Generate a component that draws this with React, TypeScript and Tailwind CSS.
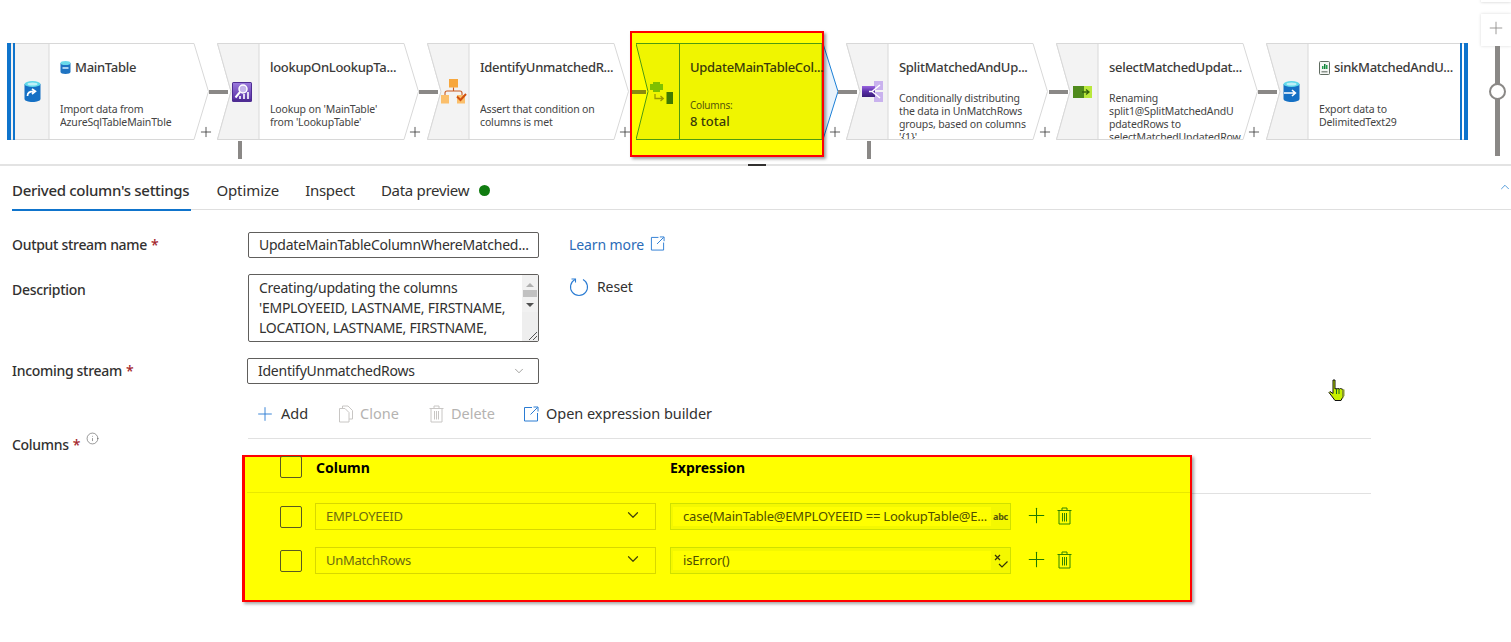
import React from 'react';
import { ChevronDown, ChevronUp, Info, Plus } from 'lucide-react';

const DbIcon = ({ arrow }: { arrow: 'curve' | 'right' }) => (
  <svg width="17" height="21" viewBox="0 0 17 21">
    <path d="M0.5 3 v15 c0 1.6 3.6 3 8 3 s8-1.4 8-3 V3z" fill="#1570c4" />
    <ellipse cx="8.5" cy="3" rx="8" ry="3" fill="#5fd8ea" />
    <ellipse cx="8.5" cy="3" rx="5" ry="1.5" fill="#bdf0f7" />
    {arrow === 'curve' ? (
      <path d="M3.5 15 c0-3 2-4.6 6-4.6 M8 8 l3.4 2.4 -3.4 2.6" fill="none" stroke="#fff" strokeWidth="1.7" />
    ) : (
      <path d="M1 12 h11 M9 9 l3.4 3 -3.4 3" fill="none" stroke="#fff" strokeWidth="1.6" />
    )}
  </svg>
);

const MiniSql = () => (
  <svg width="11" height="13" viewBox="0 0 11 13">
    <path d="M0.5 2 v9 c0 1 2.2 2 5 2 s5-1 5-2 V2z" fill="#1f74c2" />
    <ellipse cx="5.5" cy="2" rx="5" ry="2" fill="#6adbea" />
    <rect x="2.5" y="6" width="6" height="2" fill="#a9d3f2" />
  </svg>
);

const MiniCsv = () => (
  <svg width="11" height="14" viewBox="0 0 11 14">
    <rect x="0.5" y="0.5" width="10" height="13" rx="1" fill="#f4f6f4" stroke="#5f6b60" />
    <rect x="3" y="5" width="1.5" height="3" fill="#1e9e4a" />
    <rect x="5" y="3" width="1.5" height="5" fill="#137a38" />
    <rect x="7" y="4" width="1.5" height="4" fill="#1e9e4a" />
    <rect x="2.5" y="10" width="6" height="1.5" fill="#8a938b" />
  </svg>
);

const LookupIcon = () => (
  <svg width="20" height="20" viewBox="0 0 20 20">
    <defs>
      <linearGradient id="lookupFill" x1="0" y1="0" x2="0" y2="1">
        <stop offset="0" stopColor="#9a78dc" />
        <stop offset="1" stopColor="#5c34a8" />
      </linearGradient>
    </defs>
    <rect width="20" height="20" rx="1.5" fill="#4f2d94" />
    <rect x="1" y="1" width="18" height="16" fill="url(#lookupFill)" />
    <path d="M8 14 V17 M12 12 V17 M16 10 V17" stroke="#fff" strokeWidth="1.6" />
    <circle cx="11" cy="7" r="4" fill="#c4b4ea" stroke="#fff" strokeWidth="1.5" />
    <path d="M8 10 L3.5 15.5" stroke="#fff" strokeWidth="2" />
  </svg>
);

const AssertIcon = () => (
  <svg width="27" height="25" viewBox="0 0 27 25">
    <rect x="9" y="0" width="9" height="8.5" fill="#f7a73d" />
    <path d="M13.5 8.5 v3.5 M5 16 v-2 q0-2 2-2 h13 q2 0 2 2 v2" fill="none" stroke="#c8591e" strokeWidth="1.1" />
    <rect x="1" y="16" width="8" height="8.5" fill="#fbbf6b" />
    <rect x="17" y="16" width="8" height="8.5" fill="#fbbf6b" />
    <path d="M17 17.5 l3.5 3.5 5.5-6" fill="none" stroke="#d0500f" strokeWidth="2" />
  </svg>
);

const DerivedIcon = () => (
  <svg width="24" height="23" viewBox="0 0 24 23">
    <path d="M3 0 h7 v2 h3 v6 h-3 v2 h-7 v-2 h-3 v-6 h3z" fill="#7fc000" />
    <path d="M5 12 v4.5 h8 M10.5 14 l2.8 2.5 -2.8 2.5" fill="none" stroke="#9a9a00" strokeWidth="1.3" />
    <rect x="16.5" y="10" width="6.5" height="12" fill="#3f7a00" />
  </svg>
);

const SplitIcon = () => (
  <svg width="22" height="21" viewBox="0 0 22 21">
    <defs>
      <linearGradient id="splitFill" x1="0" y1="0" x2="0" y2="1">
        <stop offset="0" stopColor="#9a66e0" />
        <stop offset="0.5" stopColor="#5a2fa8" />
        <stop offset="1" stopColor="#3a1f7a" />
      </linearGradient>
    </defs>
    <rect x="12" y="0" width="9" height="9" fill="#c9b2ee" />
    <rect x="12" y="11" width="9" height="10" fill="#c9b2ee" />
    <rect x="0" y="5" width="13" height="11" fill="url(#splitFill)" />
    <path d="M7 10.5 H10 L18 4 M10 10.5 L18 17" fill="none" stroke="#fff" strokeWidth="1.5" />
  </svg>
);

const SelectIcon = () => (
  <svg width="19" height="12" viewBox="0 0 19 12">
    <rect x="0" y="0" width="11" height="12" fill="#4f8a1c" />
    <rect x="11" y="0" width="8" height="12" fill="#b9e83c" />
    <path d="M9 6 h7 M13 3.5 l3 2.5 -3 2.5" fill="none" stroke="#35620c" strokeWidth="1.3" />
  </svg>
);

const Shape = ({ leftFlat, rightFlat }: { leftFlat?: boolean; rightFlat?: boolean }) => {
  const w = 202;
  const leftEdge = leftFlat ? 'L0.5 0.5' : 'L14 48.5 L0.5 0.5';
  const rightEdge = rightFlat ? `L${w - 0.5} 0.5 L${w - 0.5} 96.5` : `L${w - 15} 0.5 L${w - 0.5} 48.5 L${w - 15} 96.5`;
  return (
    <svg className="absolute inset-0" width={w} height="97" viewBox={`0 0 ${w} 97`}>
      <path d={`M0.5 0.5 ${rightEdge} L0.5 96.5 ${leftEdge}Z`} fill="#fff" stroke="#d8d8d8" />
      <path d={`M0.5 0.5 L42 0.5 L42 96.5 L0.5 96.5 ${leftEdge}Z`} fill="#f3f3f3" stroke="#d8d8d8" />
    </svg>
  );
};

type NodeProps = {
  pos: string;
  icon: React.ReactNode;
  titleIcon?: React.ReactNode;
  title: string;
  lines: string[];
  descPad: string;
  first?: boolean;
  last?: boolean;
};

const FlowNode = ({ pos, icon, titleIcon, title, lines, descPad, first, last }: NodeProps) => (
  <div className={`absolute top-[43px] h-[97px] w-[202px] ${pos}`}>
    <Shape leftFlat={first} rightFlat={last} />
    <div className="absolute left-[11px] top-0 flex h-[97px] w-[28px] items-center justify-center">{icon}</div>
    <div className={`absolute left-[53px] top-0 h-[96px] w-[140px] overflow-hidden pt-[18px] ${descPad}`}>
      <div className="flex h-[13px] items-center gap-1 whitespace-nowrap text-[13px] font-medium leading-[13px] tracking-[-0.3px] text-[#3b3a39]">
        {titleIcon}
        {title}
      </div>
      <div className="text-[10.5px] leading-[13px] tracking-[-0.15px] text-[#444]">
        {lines.map((l) => (
          <div key={l} className="whitespace-nowrap">{l}</div>
        ))}
      </div>
    </div>
    {first && (
      <>
        <div className="absolute left-0 top-0 h-[97px] w-1 bg-[#0f74cc]" />
        <div className="absolute left-[6px] top-0 h-[97px] w-[2px] bg-[#0f74cc]" />
      </>
    )}
    {last && (
      <>
        <div className="absolute right-[6px] top-0 h-[97px] w-[2px] bg-[#0f74cc]" />
        <div className="absolute right-0 top-0 h-[97px] w-1 bg-[#0f74cc]" />
      </>
    )}
  </div>
);

const HBar = ({ pos }: { pos: string }) => <div className={`absolute top-[90px] h-[4px] w-[19px] bg-[#8a8886] ${pos}`} />;
const VBar = ({ pos }: { pos: string }) => <div className={`absolute top-[141px] h-[18px] w-[4px] bg-[#8a8886] ${pos}`} />;
const AddMark = ({ pos }: { pos: string }) => (
  <Plus className={`absolute top-[124px] ${pos}`} size={16} strokeWidth={1.2} color="#333" />
);

const Canvas = () => (
  <div className="relative h-[164px]">
    <FlowNode
      pos="left-[7px]"
      first
      icon={<DbIcon arrow="curve" />}
      titleIcon={<MiniSql />}
      title="MainTable"
      lines={['Import data from', 'AzureSqlTableMainTble']}
      descPad="[&>div:last-child]:mt-[29px]"
    />
    <FlowNode
      pos="left-[217px]"
      icon={<LookupIcon />}
      title="lookupOnLookupTa..."
      lines={["Lookup on 'MainTable'", "from 'LookupTable'"]}
      descPad="[&>div:last-child]:mt-[29px]"
    />
    <FlowNode
      pos="left-[427px]"
      icon={<div className="ml-[3px]"><AssertIcon /></div>}
      title="IdentifyUnmatchedR..."
      lines={['Assert that condition on', 'columns is met']}
      descPad="[&>div:last-child]:mt-[29px]"
    />
    <FlowNode
      pos="left-[846px]"
      icon={<div className="ml-[3px]"><SplitIcon /></div>}
      title="SplitMatchedAndUp..."
      lines={['Conditionally distributing', 'the data in UnMatchRows', 'groups, based on columns', "'{1}'"]}
      descPad="[&>div:last-child]:mt-[18px]"
    />
    <FlowNode
      pos="left-[1056px]"
      icon={<div className="ml-[3px]"><SelectIcon /></div>}
      title="selectMatchedUpdat..."
      lines={['Renaming', 'split1@SplitMatchedAndU', 'pdatedRows to', 'selectMatchedUpdatedRow']}
      descPad="[&>div:last-child]:mt-[18px]"
    />
    <FlowNode
      pos="left-[1266px]"
      last
      icon={<DbIcon arrow="right" />}
      titleIcon={<MiniCsv />}
      title="sinkMatchedAndU..."
      lines={['Export data to', 'DelimitedText29']}
      descPad="[&>div:last-child]:mt-[29px]"
    />

    {/* selected node tip sticks out of the highlight box */}
    <svg className="absolute left-[800px] top-[43px]" width="40" height="97" viewBox="0 0 40 97">
      <path d="M0 0.5 L23 0.5 L38 48.5 L23 96.5 L0 96.5Z" fill="#e9f3fc" stroke="#1a7fd6" />
    </svg>

    <HBar pos="left-[209px]" />
    <HBar pos="left-[419px]" />
    <HBar pos="left-[838px]" />
    <HBar pos="left-[1049px]" />
    <HBar pos="left-[1258px]" />
    <VBar pos="left-[238px]" />
    <VBar pos="left-[867px]" />

    <AddMark pos="left-[198px]" />
    <AddMark pos="left-[407px]" />
    <AddMark pos="left-[617px]" />
    <AddMark pos="left-[827px]" />
    <AddMark pos="left-[1037px]" />
    <AddMark pos="left-[1246px]" />

    {/* highlighted node */}
    <div className="absolute left-[630px] top-[31px] h-[126px] w-[194px] border-2 border-[#ff0000] bg-[#ffff00] shadow-[2px_2px_3px_rgba(0,0,0,0.4)]">
      <svg className="absolute left-[4px] top-[10px]" width="186" height="97" viewBox="0 0 186 97">
        <path d="M0 0.5 H186 V96.5 H0 L12 48.5Z" fill="#f0f500" stroke="#4f9a10" />
        <path d="M43.5 0 V97" stroke="#4f9a10" />
      </svg>
      <div className="absolute left-0 top-[57px] h-[4px] w-[14px] bg-[#8a8a10]" />
      <div className="absolute left-[18px] top-[49px]"><DerivedIcon /></div>
      <div className="absolute left-[58px] top-[26px] whitespace-nowrap text-[13px] font-medium leading-[16px] tracking-[-0.3px] text-[#3a3a0a]">
        UpdateMainTableCol...
      </div>
      <div className="absolute left-[58px] top-[66px] text-[10px] leading-[13px] tracking-[-0.2px] text-[#55550a]">Columns:</div>
      <div className="absolute left-[58px] top-[80px] text-[13px] font-medium leading-[16px] text-[#3a3a0a]">8 total</div>
    </div>

    {/* zoom control */}
    <div className="absolute right-0 top-0 h-[2px] w-[30px] bg-white shadow-[0_0_3px_rgba(0,0,0,0.25)]" />
    <div className="absolute right-0 top-[14px] flex h-[32px] w-[30px] items-center justify-center bg-white pb-1 shadow-[0_0_3px_rgba(0,0,0,0.15)]">
      <Plus size={20} strokeWidth={1} color="#8a8886" />
    </div>
    <div className="absolute left-[1495px] top-[46px] h-[110px] w-[5px] bg-[#8a8886]" />
    <div className="absolute left-[1489px] top-[83px] h-[17px] w-[17px] rounded-full border-2 border-[#8a8886] bg-white" />
  </div>
);

const Tabs = () => (
  <div className="relative flex h-[44px] items-center pl-3 pt-[5px] text-[15px] text-[#323130]">
    <div className="absolute left-3 right-0 bottom-0 h-px bg-[#dfdfdf]" />
    <div className="absolute left-3 bottom-[-1px] h-[2px] w-[179px] bg-[#0f74cc]" />
    <span className="font-medium tracking-[-0.3px]">Derived column's settings</span>
    <span className="ml-[27px] tracking-[-0.1px]">Optimize</span>
    <span className="ml-[26px] tracking-[-0.3px]">Inspect</span>
    <span className="ml-[26px] tracking-[-0.3px]">Data preview</span>
    <span className="ml-[10px] h-[11px] w-[11px] rounded-full bg-[#107c10]" />
    <ChevronUp className="absolute right-[-1px] top-[14px]" size={14} strokeWidth={1.2} color="#0f74cc" />
  </div>
);

const Label = ({ children, star, width = 'w-[248px]' }: { children: string; star?: boolean; width?: string }) => (
  <div className={`${width} shrink-0 pl-3 text-sm font-medium leading-[18px] tracking-[-0.3px] text-[#323130]`}>
    {children}
    {star && <span className="ml-1 text-[#a4262c]">*</span>}
  </div>
);

const OpenIcon = ({ size = 16 }: { size?: number }) => (
  <svg width={size} height={size} viewBox="0 0 16 16" fill="none" stroke="#2b7cd3">
    <path d="M9 1.5 H1.5 V15 H14.5 V7" />
    <path d="M7.5 8.5 L14.5 1.5 M10.5 1 H15 V5.5" />
  </svg>
);

const CloneIcon = () => (
  <svg width="16" height="18" viewBox="0 0 16 18" fill="none" stroke="#c8c6c4">
    <path d="M4.5 3.5 V1 H10 L14.5 5.5 V14 H11" />
    <path d="M1.5 3.5 H7 L11 7.5 V17 H1.5Z" />
  </svg>
);

const TrashIcon = ({ color }: { color: string }) => (
  <svg width="15" height="18" viewBox="0 0 15 18" fill="none" stroke={color}>
    <path d="M0.5 3.5 H14.5 M5 3.5 V1 H10 V3.5" />
    <path d="M2 3.5 V17 H13 V3.5" />
    <path d="M5.5 6 V14.5 M7.5 6 V14.5 M9.5 6 V14.5" />
  </svg>
);

const CheckBox = ({ extra = '' }: { extra?: string }) => (
  <div className={`h-[22px] w-[22px] shrink-0 rounded-[2px] border border-[#5a5a20] ${extra}`} />
);

const Row = ({ name, expr, end, extra }: { name: string; expr: string; end: React.ReactNode; extra: string }) => (
  <div className={`flex items-center ${extra}`}>
    <CheckBox />
    <div className="ml-[13px] flex h-[27px] w-[341px] items-center justify-between border border-[#d8d800] pl-[10px] pr-[13px] text-[13px] tracking-[-0.25px] text-[#6b6b10]">
      {name}
      <ChevronDown size={18} strokeWidth={1.6} color="#45450a" className="mb-[3px]" />
    </div>
    <div className="ml-[14px] flex h-[27px] w-[341px] items-center border border-[#cfe000] bg-[#f4f800] pl-[2px] text-[13px] tracking-[-0.2px] text-[#4f4f00]">
      <div className="flex h-[19px] w-[318px] items-center overflow-hidden whitespace-nowrap bg-[#ffff00] pl-[10px]">{expr}</div>
      <div className="flex flex-1 items-center justify-center">{end}</div>
    </div>
    <Plus className="ml-[13px] mb-[2px]" size={25} strokeWidth={1} color="#1f7a00" />
    <div className="ml-[8px] mb-[2px]"><TrashIcon color="#2f8500" /></div>
  </div>
);

const MatchIcon = () => (
  <svg width="14" height="14" viewBox="0 0 14 14" fill="none" stroke="#33330a" strokeWidth="1.2">
    <path d="M1 1 L6 6 M6 1 L1 6" />
    <path d="M5 10 L8 13 L13.5 7.5" />
  </svg>
);

const ColumnsPanel = () => (
  <div className="relative ml-[-6px] mt-[-1px] h-[147px] w-[950px] border-2 border-l-[3px] border-[#ff0000] bg-[#ffff00] shadow-[2px_2px_3px_rgba(0,0,0,0.35)]">
    <div className="ml-[2px] h-[36px] border-b border-[#e8e800]">
      <div className="flex items-start pl-[33px]">
        <CheckBox extra="mt-[-1px]" />
        <div className="ml-[14px] mt-[1px] w-[354px] text-sm font-bold leading-5 text-black">Column</div>
        <div className="mt-[1px] text-sm font-bold leading-5 text-black">Expression</div>
      </div>
    </div>
    <div className="pl-[35px]">
      <Row
        name="EMPLOYEEID"
        expr="case(MainTable@EMPLOYEEID == LookupTable@E..."
        end={<span className="text-[9px] font-bold leading-3 text-[#55550a]">abc</span>}
        extra="mt-[10px]"
      />
      <Row name="UnMatchRows" expr="isError()" end={<MatchIcon />} extra="mt-[17px]" />
    </div>
  </div>
);

const Form = () => (
  <div className="relative pt-[22px]">
    <div className="flex items-center">
      <Label star>Output stream name</Label>
      <div className="flex h-[26px] w-[291px] items-center overflow-hidden whitespace-nowrap rounded-[2px] border border-[#605e5c] pl-[10px] text-sm tracking-[-0.25px] text-[#323130]">
        UpdateMainTableColumnWhereMatched...
      </div>
      <a className="ml-[30px] text-sm tracking-[-0.1px] text-[#2b6cb8]">Learn more</a>
      <div className="ml-[6px] mb-1"><OpenIcon size={15} /></div>
    </div>

    <div className="mt-[16px] flex items-start">
      <div className="pt-[7px]"><Label>Description</Label></div>
      <div className="relative h-[68px] w-[291px] overflow-hidden rounded-[2px] border border-[#605e5c] pl-[10px] pt-[3px] text-sm leading-5 tracking-[-0.25px] text-[#323130]">
        <div className="whitespace-nowrap">Creating/updating the columns</div>
        <div className="whitespace-nowrap">'EMPLOYEEID, LASTNAME, FIRSTNAME,</div>
        <div className="whitespace-nowrap">LOCATION, LASTNAME, FIRSTNAME,</div>
        <div className="absolute right-0 top-0 flex h-full w-[16px] flex-col items-center bg-[#f1f1f1]">
          <div className="mt-[8px] h-0 w-0 border-x-[4px] border-b-[4px] border-x-transparent border-b-[#b0b0b0]" />
          <div className="mt-[3px] h-[16px] w-[14px] bg-[#c1c1c1]" />
          <div className="mt-[6px] h-0 w-0 border-x-[4px] border-t-[4px] border-x-transparent border-t-[#505050]" />
          <div className="mt-[5px] h-full w-full bg-[#eeeeee]" />
        </div>
        <svg className="absolute bottom-0 right-0" width="10" height="10" viewBox="0 0 10 10" stroke="#555">
          <path d="M1 9 L9 1 M5 9 L9 5" />
        </svg>
      </div>
      <svg className="ml-[30px] mt-[3px]" width="20" height="20" viewBox="0 0 20 20" fill="none" stroke="#2b7cd3" strokeWidth="1.1">
        <path d="M6 2.5 A8.5 8.5 0 1 0 14 2.5" />
        <path d="M6.5 5.5 V2 H2.5" />
      </svg>
      <span className="ml-[8px] mt-[3px] text-sm leading-5 tracking-[-0.1px] text-[#323130]">Reset</span>
    </div>

    <div className="mt-[16px] flex items-center">
      <Label star width="w-[247px]">Incoming stream</Label>
      <div className="flex h-[26px] w-[292px] items-center justify-between rounded-[2px] border border-[#605e5c] pl-[10px] pr-[12px] text-sm tracking-[-0.25px] text-[#323130]">
        IdentifyUnmatchedRows
        <ChevronDown size={14} strokeWidth={1} color="#605e5c" />
      </div>
    </div>

    <div className="ml-[248px] mt-[16px] flex h-[28px] w-[1123px] items-center pl-[6px] text-[14.5px]">
      <Plus size={22} strokeWidth={1} color="#2b7cd3" />
      <span className="ml-[5px] text-[#323130]">Add</span>
      <div className="ml-[30px]"><CloneIcon /></div>
      <span className="ml-[6px] text-[#b5b3b1]">Clone</span>
      <div className="ml-[30px]"><TrashIcon color="#c8c6c4" /></div>
      <span className="ml-[7px] text-[#b5b3b1]">Delete</span>
      <div className="ml-[28px]"><OpenIcon size={16} /></div>
      <span className="ml-[7px] tracking-[-0.05px] text-[#323130]">Open expression builder</span>
    </div>

    <div className="relative ml-[248px] mt-[10px] flex w-[1123px] border-t border-[#e1e1e1] pt-[17px]">
      <div className="absolute left-[944px] top-[54px] h-px w-[179px] bg-[#e1e1e1]" />
      <div className="absolute left-[-236px] top-[-3px] flex items-start text-sm font-medium leading-[18px] tracking-[-0.3px] text-[#323130]">
        <span>Columns</span>
        <span className="ml-1 text-[#a4262c]">*</span>
        <Info className="ml-[6px] mt-[-4px]" size={13} strokeWidth={1} color="#444" />
      </div>
      <ColumnsPanel />
    </div>
  </div>
);

const HandCursor = () => (
  <svg className="absolute left-[1328px] top-[379px]" width="18" height="23" viewBox="0 0 18 23">
    <path
      d="M5 1 h2 v9 l1-.5 1 .5 1-.5 1.5.5 1-.5 2.5 1 v7 l-2 4 h-6 l-6-8 1-1 3 2z"
      fill="#c8f000"
      stroke="#111"
      strokeWidth="1"
    />
    <path d="M8.5 10 v5 M11 10 v5" stroke="#1d6b1d" strokeWidth="1" />
    <path d="M14 10.5 h2.5 v6 l-2 4z" fill="#8a9a30" />
  </svg>
);

export default function App() {
  return (
    <div className="relative h-[642px] w-full overflow-hidden bg-white font-['Noto_Sans','Open_Sans',sans-serif]">
      <Canvas />
      <div className="h-[2px] bg-[#e3e3e3]" />
      <div className="absolute left-[748px] top-[164px] h-[2px] w-[18px] bg-[#323130]" />
      <Tabs />
      <Form />
      <HandCursor />
    </div>
  );
}
